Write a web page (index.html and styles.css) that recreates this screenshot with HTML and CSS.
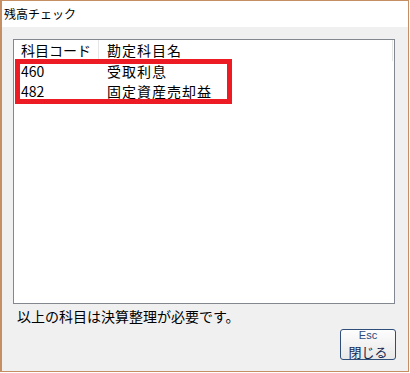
FILE: index.html
```html
<!DOCTYPE html>
<html lang="ja">
<head>
  <meta charset="UTF-8">
  <title>残高チェック</title>
  <link rel="stylesheet" href="styles.css">
</head>
<body>
  <div class="window">
    <div class="titlebar">残高チェック</div>

    <div class="content">
      <!-- 科目リスト -->
      <div class="list">
        <div class="list-head">
          <div class="col col-code">科目コード</div>
          <div class="col col-name">勘定科目名</div>
        </div>
        <div class="list-row">
          <div class="col col-code">460</div>
          <div class="col col-name">受取利息</div>
        </div>
        <div class="list-row">
          <div class="col col-code">482</div>
          <div class="col col-name">固定資産売却益</div>
        </div>
        <div class="highlight"></div>
      </div>

      <p class="message">以上の科目は決算整理が必要です。</p>

      <div class="actions">
        <button class="button">
          <span class="key">Esc</span>
          <span class="label">閉じる</span>
        </button>
      </div>
    </div>
  </div>
</body>
</html>
```

FILE: styles.css
```css
* {
  margin: 0;
  padding: 0;
  box-sizing: border-box;
}

body {
  font-family: "Noto Sans CJK JP", "Noto Sans", sans-serif;
  background: #fff;
  color: #000;
}

/* ウィンドウ枠 */
.window {
  width: 409px;
  height: 372px;
  border: 1px solid #c68f63;
  border-left-width: 2px;
  display: flex;
  flex-direction: column;
  background: #f0f0f0;
}

.titlebar {
  height: 26px;
  background: #fff;
  font-size: 12px;
  line-height: 26px;
  padding-left: 2px;
}

.content {
  flex: 1;
  padding: 12px 13px 0 11px;
  display: flex;
  flex-direction: column;
}

/* リスト */
.list {
  position: relative;
  height: 265px;
  background: #fff;
  border: 1px solid #828790;
  font-size: 14px;
}

.list-head,
.list-row {
  display: flex;
  height: 20px;
  line-height: 20px;
}

.list-head {
  height: 21px;
  line-height: 21px;
  border-right: 1px solid #e5e5e5;
  margin-right: 1px;
}

.col {
  white-space: nowrap;
}

.col-code {
  width: 85px;
  padding-left: 7px;
}

.col-name {
  padding-left: 8px;
  letter-spacing: 1px;
}

.list-head .col-code {
  border-right: 1px solid #e5e5e5;
}

/* 赤枠の強調 */
.highlight {
  position: absolute;
  left: 1px;
  top: 19px;
  width: 217px;
  height: 45px;
  border: 5px solid #ed1c24;
}

.message {
  font-size: 14px;
  line-height: 22px;
  margin-top: 1px;
  padding-left: 4px;
}

.actions {
  display: flex;
  justify-content: flex-end;
  margin-top: 2px;
}

.button {
  width: 56px;
  height: 31px;
  border: 1px solid #2f4f7a;
  border-radius: 3px;
  background: linear-gradient(#fdfdfd, #e8e8e8);
  display: flex;
  flex-direction: column;
  align-items: center;
  justify-content: center;
  font-family: inherit;
  margin-right: -1px;
}

.key {
  display: block;
  font-family: "Liberation Sans", Arial, sans-serif;
  font-size: 11px;
  line-height: 13px;
  color: #2c4a7c;
}

.label {
  display: block;
  font-size: 13px;
  line-height: 19px;
  color: #15264f;
}
```
